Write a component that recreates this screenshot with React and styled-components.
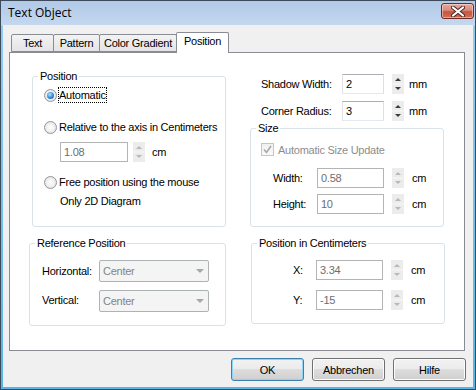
import React from 'react';
import styled, { createGlobalStyle } from 'styled-components';

const GlobalStyle = createGlobalStyle`
  html, body {
    margin: 0;
    padding: 0;
    background: #ffffff;
  }
  * {
    box-sizing: border-box;
  }
`

const Window = styled.div`
  width: 476px;
  height: 390px;
  border: 1px solid #3c4a5a;
  background: linear-gradient(#b3cbe8 0, #c4d8ef 24px, #8fcdef 25px, #56b4e6 100%);
  display: flex;
  flex-direction: column;
  font-family: "Liberation Sans", Arial, sans-serif;
  font-size: 11px;
  letter-spacing: -0.25px;
  color: #000;
`

const TitleBar = styled.div`
  height: 24px;
  display: flex;
  align-items: center;
  justify-content: space-between;
  padding: 0 1px 0 7px;
  background: linear-gradient(#b1c9e7, #c4d8ef);
`

const Title = styled.span`
  font-family: "Open Sans", "Liberation Sans", sans-serif;
  font-size: 12px;
  letter-spacing: 0;
  margin-top: -2px;
`

const CloseButton = styled.div`
  width: 33px;
  height: 16px;
  margin-top: -4px;
  border: 1px solid #6b2c25;
  border-radius: 3px;
  background: linear-gradient(#e8aaa0 0%, #d98a7c 45%, #c85542 55%, #cf6e52 100%);
  box-shadow: inset 0 0 0 1px rgba(255, 230, 220, 0.5);
  display: flex;
  align-items: center;
  justify-content: center;
`

const Client = styled.div`
  flex: 1;
  margin: 0 2px 2px 2px;
  background: #f0f0f0;
  padding: 7px 8px 0 6px;
  display: flex;
  flex-direction: column;
`

const TabStrip = styled.div`
  height: 20px;
  display: flex;
  align-items: flex-end;
  padding-left: 2px;
  position: relative;
  z-index: 1;
`

const Tab = styled.div`
  height: ${p => (p.active ? '21px' : '18px')};
  margin-bottom: ${p => (p.active ? '-1px' : '0')};
  margin-left: -1px;
  width: ${p => p.w}px;
  border: 1px solid #898c95;
  border-bottom: ${p => (p.active ? 'none' : '1px solid #898c95')};
  border-radius: 2px 2px 0 0;
  background: ${p => (p.active ? '#ffffff' : 'linear-gradient(#f3f3f3, #e4e4e4)')};
  display: flex;
  justify-content: center;
  padding-top: 2px;
  white-space: nowrap;
  &:first-child {
    margin-left: 0;
  }
`

const Panel = styled.div`
  height: 299px;
  border: 1px solid #898c95;
  background: #ffffff;
  display: flex;
  padding-left: 19px;
  gap: 24px;
`

const Column = styled.div`
  width: ${p => p.w}px;
  display: flex;
  flex-direction: column;
`

const Group = styled.fieldset`
  margin: ${p => p.mt || 0}px 0 0 ${p => p.ml || 0}px;
  padding: 0;
  width: ${p => p.w}px;
  height: ${p => p.h}px;
  border: 1px solid #d9e2e8;
  border-radius: 3px;
  min-width: 0;
`

const Legend = styled.legend`
  margin-left: 5px;
  padding: 0 2px;
  line-height: 13px;
  font-size: 11px;
`

const GroupBody = styled.div`
  display: flex;
  flex-direction: column;
  padding-left: ${p => p.pl}px;
`

const RadioRow = styled.div`
  display: flex;
  align-items: center;
  height: 16px;
  margin-top: ${p => p.mt}px;
`

const RadioCircle = styled.span`
  width: 13px;
  height: 13px;
  border-radius: 50%;
  border: 1px solid #969696;
  background: radial-gradient(circle at 50% 50%, #ffffff 0%, #eeeeee 55%, #d4d4d4 100%);
  display: flex;
  align-items: center;
  justify-content: center;
  &::after {
    content: '';
    display: ${p => (p.checked ? 'block' : 'none')};
    width: 7px;
    height: 7px;
    border-radius: 50%;
    background: radial-gradient(circle at 40% 35%, #b5e3fb 0%, #3d8fe0 50%, #0b4a9e 100%);
  }
`

const RadioLabel = styled.span`
  margin-left: 1px;
  border: 1px ${p => (p.focused ? 'dotted #000' : 'solid transparent')};
  line-height: 14px;
  white-space: nowrap;
`

const PlainText = styled.div`
  margin-top: ${p => p.mt}px;
  padding-left: ${p => p.pl || 0}px;
  height: 16px;
  line-height: 16px;
  white-space: nowrap;
`

const FieldRow = styled.div`
  display: flex;
  align-items: center;
  margin-top: ${p => p.mt}px;
  padding-left: ${p => p.pl || 0}px;
`

const FieldLabel = styled.span`
  width: ${p => p.w}px;
  flex-shrink: 0;
  white-space: nowrap;
  margin-top: ${p => p.dy || 0}px;
`

const TextBox = styled.div`
  width: ${p => p.w}px;
  height: 20px;
  border: 1px solid;
  border-color: ${p => (p.disabled ? '#b4b4b4' : '#abadb3 #dbdfe6 #e3e9ef #e2e3ea')};
  background: #ffffff;
  color: ${p => (p.disabled ? '#6d6d6d' : '#000')};
  padding-left: 3px;
  display: flex;
  align-items: center;
  flex-shrink: 0;
`

const Unit = styled.span`
  margin-left: ${p => p.gap}px;
  white-space: nowrap;
`

const ComboBox = styled.div`
  width: 110px;
  height: 22px;
  border: 1px solid #adb2b5;
  border-radius: 2px;
  background: #f4f4f4;
  color: #838383;
  padding: 0 4px 0 3px;
  display: flex;
  align-items: center;
  justify-content: space-between;
`

const CheckRow = styled.div`
  display: flex;
  align-items: center;
  margin-top: ${p => p.mt}px;
  padding-left: ${p => p.pl}px;
  color: #8d8d8d;
  gap: 4px;
`

const CheckBox = styled.span`
  width: 13px;
  height: 13px;
  border: 1px solid #c5c5c5;
  background: linear-gradient(#f0f0f0, #fafafa);
  display: flex;
  align-items: center;
  justify-content: center;
`

const ButtonRow = styled.div`
  display: flex;
  justify-content: flex-end;
  gap: 8px;
  margin-top: 7px;
  margin-right: -1px;
`

const Button = styled.div`
  width: 73px;
  height: 23px;
  border: 1px solid ${p => (p.primary ? '#3c7fb1' : '#707070')};
  border-radius: 3px;
  background: linear-gradient(#f2f2f2 0%, #ebebeb 50%, #dddddd 50%, #cfcfcf 100%);
  box-shadow: inset 0 0 0 1px ${p => (p.primary ? '#8fd3f5' : '#fcfcfc')};
  display: flex;
  align-items: center;
  justify-content: center;
`

function Spinner({ disabled, h = 20 }) {
  const c = disabled ? '#b8b8b8' : '#3c3c3c';
  return (
    <svg width="12" height={h} style={{ flexShrink: 0 }} viewBox={`0 0 12 ${h}`}>
      <rect x="0" y="0" width="12" height={h} fill="#ececec" />
      <rect x="0" y={h / 2 - 0.5} width="12" height="1" fill="#f7f7f7" />
      <polygon points={`3,${h / 2 - 3} 9,${h / 2 - 3} 6,${h / 2 - 6}`} fill={c} />
      <polygon points={`3,${h / 2 + 3} 9,${h / 2 + 3} 6,${h / 2 + 6}`} fill={c} />
    </svg>
  );
}

function ComboArrow() {
  return (
    <svg width="8" height="4" viewBox="0 0 8 4">
      <polygon points="0,0 8,0 4,4" fill="#a6a6a6" />
    </svg>
  );
}

function NumberField({ value, w, disabled, unit, gapSpin = 8, gapUnit = 5 }) {
  return (
    <>
      <TextBox w={w} disabled={disabled}>{value}</TextBox>
      <span style={{ width: gapSpin, flexShrink: 0 }} />
      <Spinner disabled={disabled} />
      <Unit gap={gapUnit}>{unit}</Unit>
    </>
  );
}

export default function App() {
  return (
    <>
      <GlobalStyle />
      <Window>
        <TitleBar>
          <Title>Text Object</Title>
          <CloseButton>
            <svg width="14" height="11" viewBox="0 0 14 11">
              <path d="M2 1.5 L12 9.5 M12 1.5 L2 9.5" stroke="#4a2622" strokeWidth="4" strokeLinecap="round" />
              <path d="M2 1.5 L12 9.5 M12 1.5 L2 9.5" stroke="#ffffff" strokeWidth="2.2" strokeLinecap="round" />
            </svg>
          </CloseButton>
        </TitleBar>
        <Client>
          <TabStrip>
            <Tab w={43}>Text</Tab>
            <Tab w={47}>Pattern</Tab>
            <Tab w={78}>Color Gradient</Tab>
            <Tab w={53} active>Position</Tab>
          </TabStrip>
          <Panel>
            <Column w={197}>
              <Group w={194} h={157} mt={17} ml={3}>
                <Legend>Position</Legend>
                <GroupBody pl={11}>
                  <RadioRow mt={4}>
                    <RadioCircle checked />
                    <RadioLabel focused>Automatic</RadioLabel>
                  </RadioRow>
                  <RadioRow mt={16}>
                    <RadioCircle />
                    <RadioLabel>Relative to the axis in Centimeters</RadioLabel>
                  </RadioRow>
                  <FieldRow mt={7} pl={16}>
                    <NumberField value="1.08" w={68} disabled unit="cm" gapSpin={5} gapUnit={7} />
                  </FieldRow>
                  <RadioRow mt={12}>
                    <RadioCircle />
                    <RadioLabel>Free position using the mouse</RadioLabel>
                  </RadioRow>
                  <PlainText mt={3} pl={16}>Only 2D Diagram</PlainText>
                </GroupBody>
              </Group>
              <Group w={197} h={89} mt={10}>
                <Legend>Reference Position</Legend>
                <GroupBody pl={12}>
                  <FieldRow mt={10}>
                    <FieldLabel w={57}>Horizontal:</FieldLabel>
                    <ComboBox>Center<ComboArrow /></ComboBox>
                  </FieldRow>
                  <FieldRow mt={8}>
                    <FieldLabel w={57} dy={-3}>Vertical:</FieldLabel>
                    <ComboBox>Center<ComboArrow /></ComboBox>
                  </FieldRow>
                </GroupBody>
              </Group>
            </Column>
            <Column w={195}>
              <FieldRow mt={21} pl={11}>
                <FieldLabel w={81}>Shadow Width:</FieldLabel>
                <NumberField value="2" w={42} unit="mm" />
              </FieldRow>
              <FieldRow mt={7} pl={11}>
                <FieldLabel w={81}>Corner Radius:</FieldLabel>
                <NumberField value="3" w={42} unit="mm" />
              </FieldRow>
              <Group w={194} h={105} mt={1}>
                <Legend>Size</Legend>
                <GroupBody pl={0}>
                  <CheckRow mt={8} pl={10}>
                    <CheckBox>
                      <svg width="9" height="9" viewBox="0 0 9 9">
                        <path d="M1 4.5 L3.5 7.5 L8 1" fill="none" stroke="#a8a8a8" strokeWidth="1.6" />
                      </svg>
                    </CheckBox>
                    Automatic Size Update
                  </CheckRow>
                  <FieldRow mt={12} pl={22}>
                    <FieldLabel w={44}>Width:</FieldLabel>
                    <NumberField value="0.58" w={67} disabled unit="cm" gapUnit={8} />
                  </FieldRow>
                  <FieldRow mt={6} pl={22}>
                    <FieldLabel w={44}>Height:</FieldLabel>
                    <NumberField value="10" w={67} disabled unit="cm" gapUnit={8} />
                  </FieldRow>
                </GroupBody>
              </Group>
              <Group w={194} h={87} mt={10} ml={1}>
                <Legend>Position in Centimeters</Legend>
                <GroupBody pl={41}>
                  <FieldRow mt={10}>
                    <FieldLabel w={23}>X:</FieldLabel>
                    <NumberField value="3.34" w={67} disabled unit="cm" gapUnit={8} />
                  </FieldRow>
                  <FieldRow mt={10}>
                    <FieldLabel w={23}>Y:</FieldLabel>
                    <NumberField value="-15" w={67} disabled unit="cm" gapUnit={8} />
                  </FieldRow>
                </GroupBody>
              </Group>
            </Column>
          </Panel>
          <ButtonRow>
            <Button primary>OK</Button>
            <Button>Abbrechen</Button>
            <Button>Hilfe</Button>
          </ButtonRow>
        </Client>
      </Window>
    </>
  );
}
